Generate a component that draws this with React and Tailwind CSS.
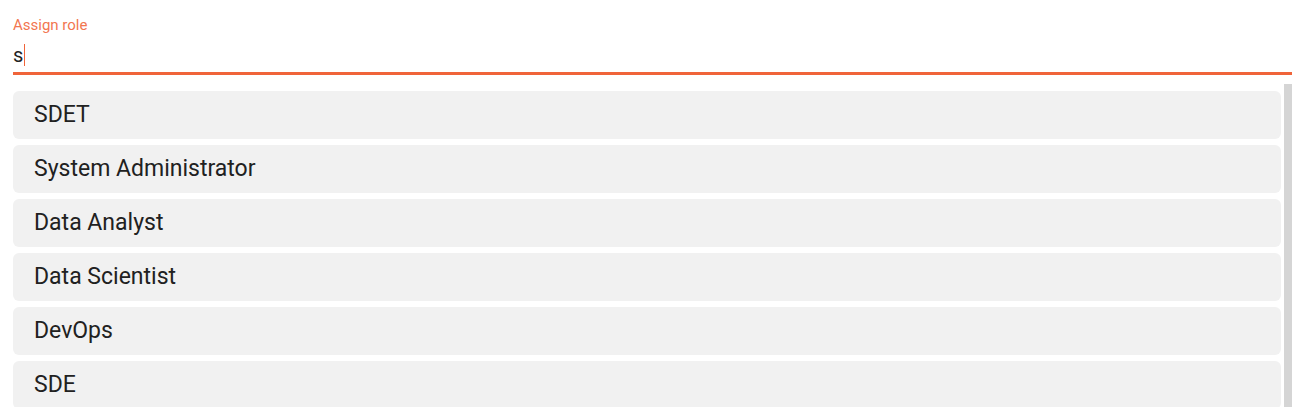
import React from "react";

const roles = ["SDET", "System Administrator", "Data Analyst", "Data Scientist", "DevOps", "SDE"];

export default function App() {
  return (
    <div className="w-[1297px] h-[407px] overflow-hidden bg-white" style={{ fontFamily: "Roboto, 'Liberation Sans', sans-serif" }}>
      <div className="pl-[13px] pr-[5px] pt-[15px]">
        <div className="text-[15px] leading-[20px] text-[#f27650]">Assign role</div>
        <div className="h-[40px] flex items-center border-b-[3px] border-[#f0643a] pt-[2px]">
          <span className="text-[20px] text-[#222]">s</span>
          <span className="w-[1px] h-[22px] bg-[#f0643a] ml-[1px]"></span>
        </div>
      </div>
      <div className="flex mt-[9px] pl-[13px] pr-[5px]">
        <div className="flex-1 flex flex-col gap-[6px] pt-[7px] pr-[3px]">
          {roles.map((r) => (
            <div key={r} className="h-[48px] shrink-0 rounded-[6px] bg-[#f1f1f1] flex items-center pl-[21px] text-[23px] text-[#212121]">
              {r}
            </div>
          ))}
        </div>
        <div className="w-[8px] h-[330px] bg-[#d5d5d5]"></div>
      </div>
    </div>
  );
}
